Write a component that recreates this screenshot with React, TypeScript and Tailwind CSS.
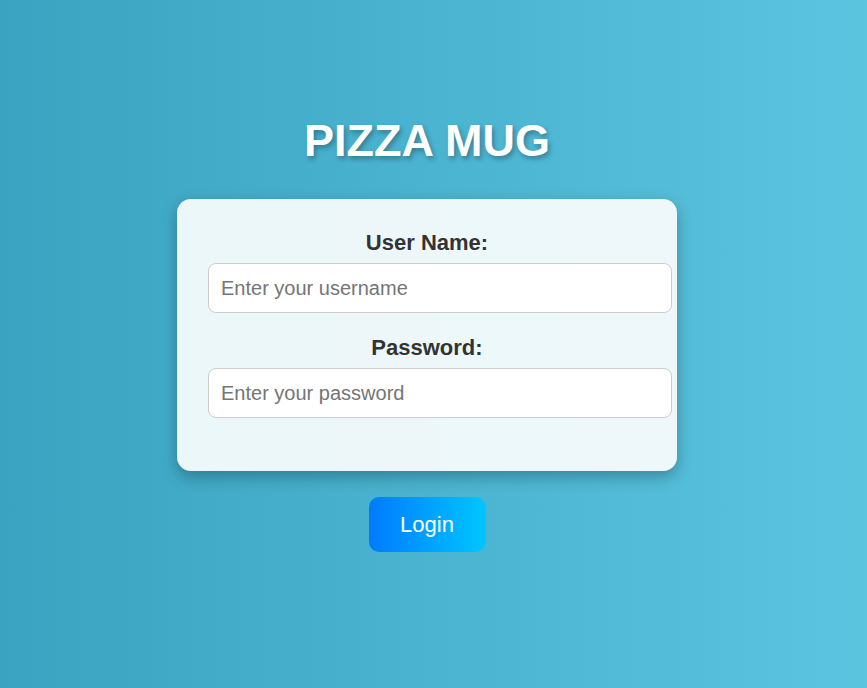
import { useState } from "react";

export default function App() {
  const [username, setUsername] = useState("");
  const [password, setPassword] = useState("");

  return (
    <div className="flex min-h-[688px] w-full flex-col items-center bg-[linear-gradient(to_right,#3aa3c1,#5bc4df)] pr-[13px] pt-[116px] font-['Liberation_Sans',Arial,sans-serif]">
      <h1 className="mb-[33px] h-[50px] text-[45px] font-bold leading-[50px] text-white [text-shadow:2px_3px_5px_rgba(0,0,0,0.3)]">
        PIZZA MUG
      </h1>

      <div className="w-[500px] rounded-[14px] bg-white/90 px-[31px] pb-[53px] pt-[31px] shadow-[0_6px_16px_rgba(0,0,0,0.28)]">
        <label className="mb-2 block h-[25px] text-center text-[22px] font-bold leading-[25px] text-[#333]">
          User Name:
        </label>
        <input
          value={username}
          onChange={(e) => setUsername(e.target.value)}
          placeholder="Enter your username"
          className="block h-[50px] w-[464px] rounded-lg border border-[#ccc] bg-white px-3 text-[20px] text-[#333] outline-none placeholder:text-[#757575]"
        />

        <label className="mb-2 mt-[22px] block h-[25px] text-center text-[22px] font-bold leading-[25px] text-[#333]">
          Password:
        </label>
        <input
          type="password"
          value={password}
          onChange={(e) => setPassword(e.target.value)}
          placeholder="Enter your password"
          className="block h-[50px] w-[464px] rounded-lg border border-[#ccc] bg-white px-3 text-[20px] text-[#333] outline-none placeholder:text-[#757575]"
        />
      </div>

      <button className="mt-[26px] h-[55px] w-[117px] rounded-[10px] bg-[linear-gradient(to_right,#007bff,#00c6ff)] text-[22px] text-white">
        Login
      </button>
    </div>
  );
}
